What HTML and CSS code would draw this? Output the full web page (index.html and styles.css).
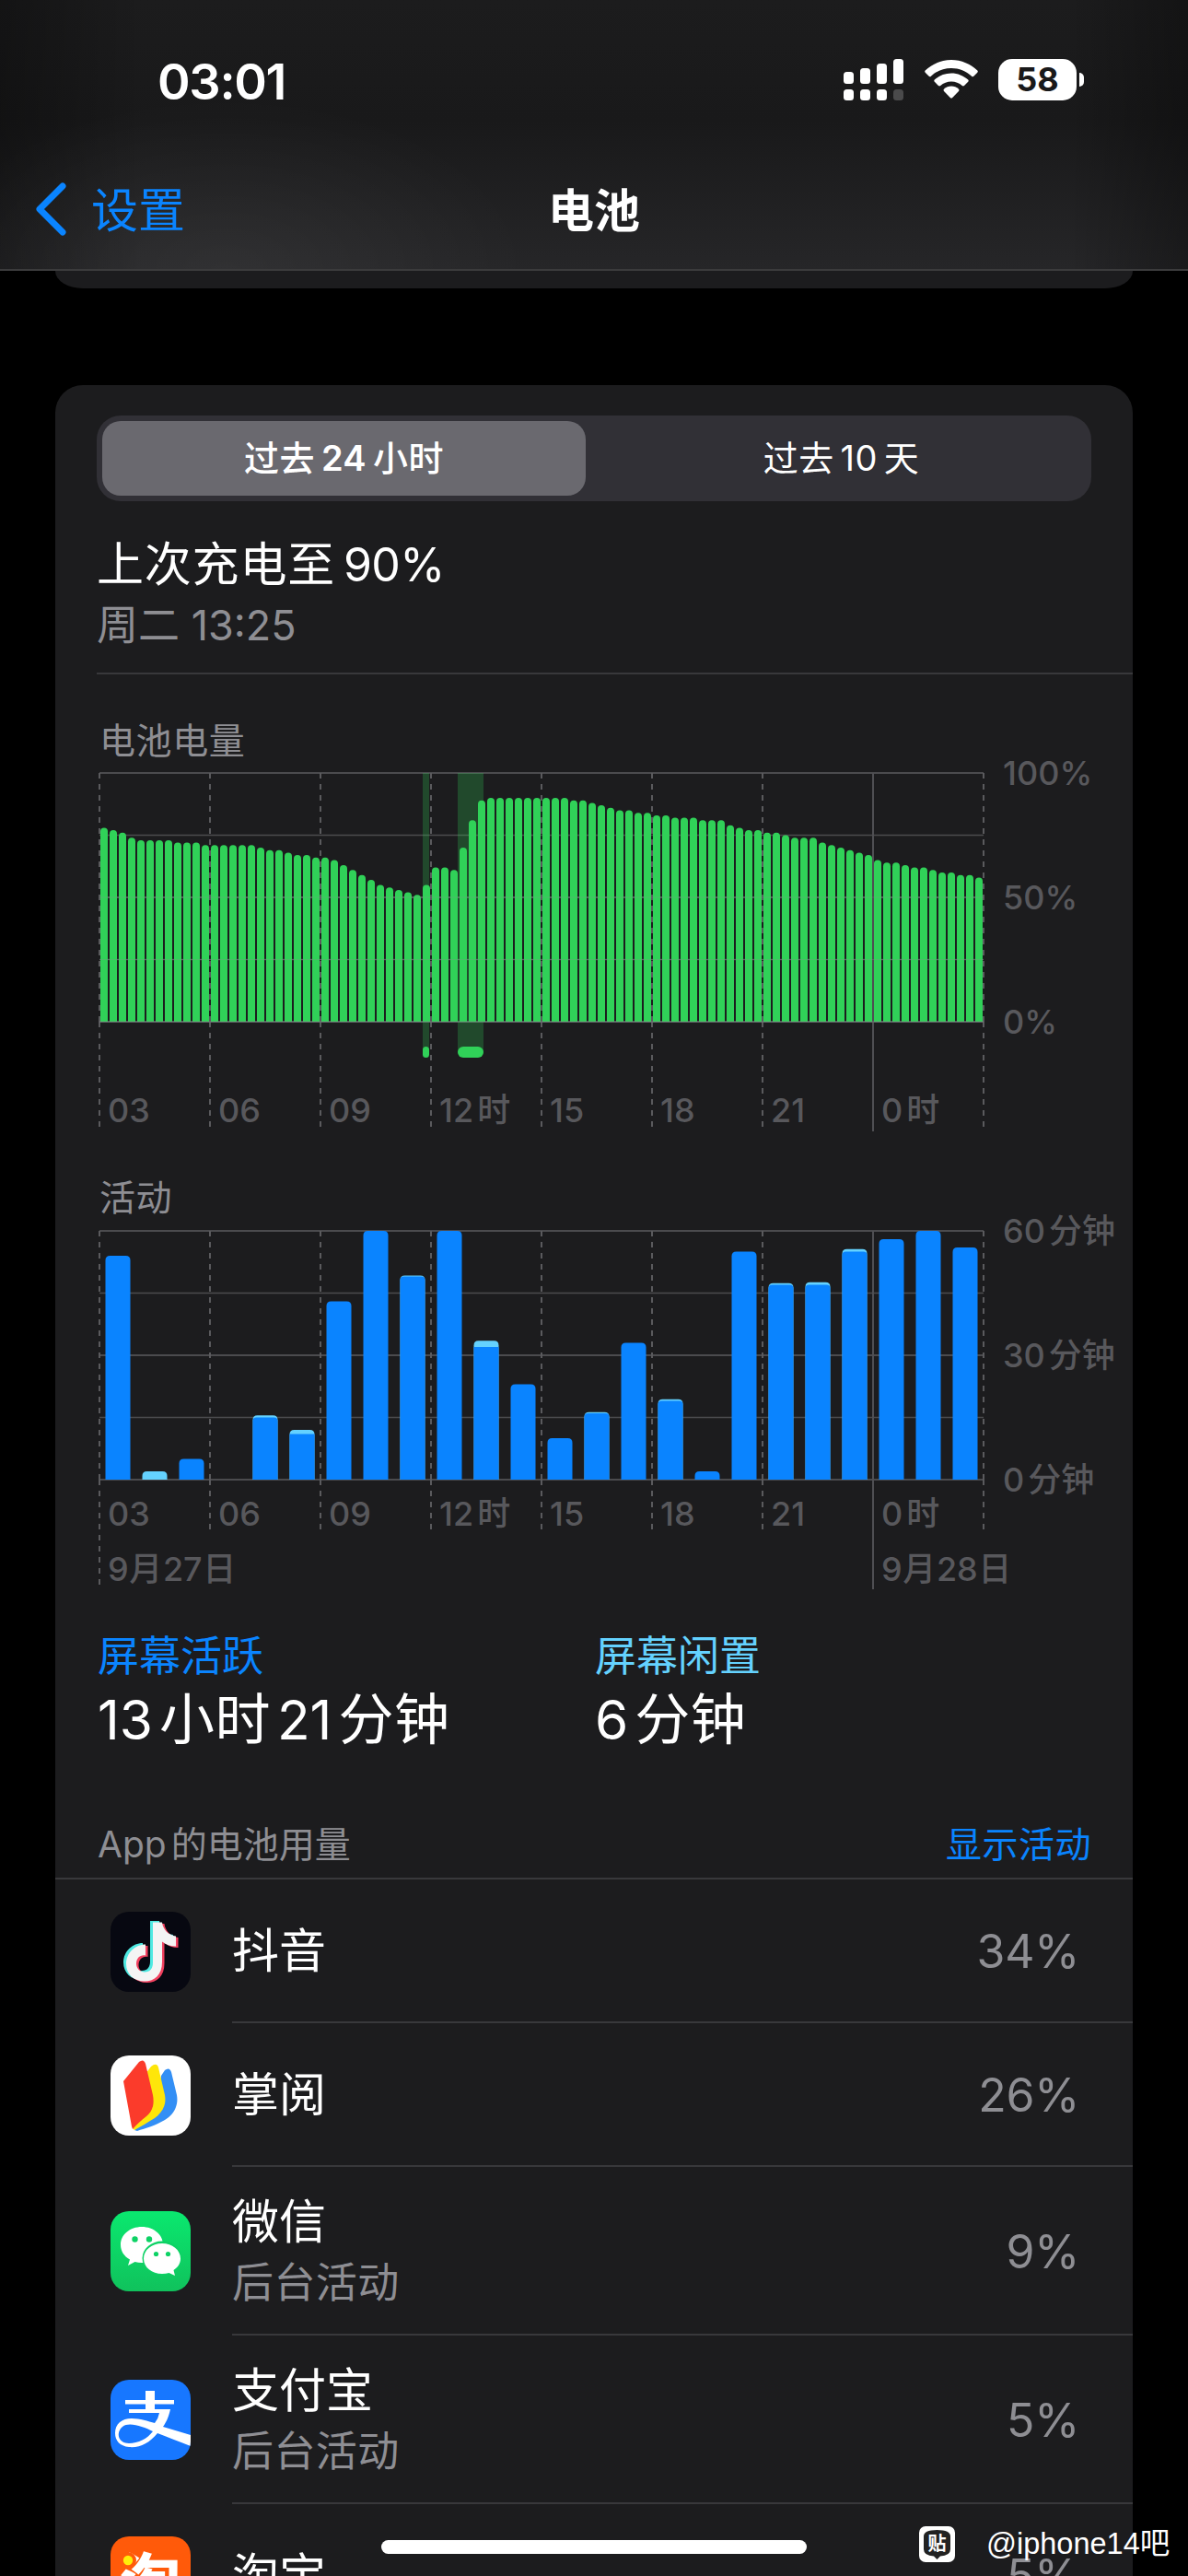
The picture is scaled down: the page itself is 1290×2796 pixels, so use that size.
FILE: index.html
```html
<!DOCTYPE html>
<html lang="zh-CN">
  <head>
    <meta charset="utf-8">
    <title>电池</title>
    <link rel="stylesheet" href="styles.css">
  </head>
  <body>
    <div id="screen">
      <header class="topbar">
        <div class="status">
          <div class="clock">03:01</div>
          <div class="status-icons">
            <svg class="signal" width="66" height="46" viewBox="0 0 66 46" fill="#fff">
              <rect x="0" y="14" width="11" height="13" rx="3.500"/>
              <rect x="18" y="10" width="11" height="17" rx="3.500"/>
              <rect x="36" y="5" width="11" height="22" rx="3.500"/>
              <rect x="54" y="0" width="11" height="27" rx="3.500"/>
              <rect x="0" y="33" width="11" height="12" rx="3.500"/>
              <rect x="18" y="33" width="11" height="12" rx="3.500"/>
              <rect x="36" y="33" width="11" height="12" rx="3.500"/>
              <rect x="54" y="33" width="11" height="12" rx="3.500" fill="#4a4a4b"/>
            </svg>
            <svg class="wifi" width="58" height="43" viewBox="0 0 58 43" fill="#fff">
              <path d="M29 0C40 0 50 4.500 57.300 11.500Q58.300 12.600 57.300 13.700L53.300 17.800Q52.200 18.700 51.100 17.700C45 12 37.500 9 29 9S13 12 6.900 17.700Q5.800 18.700 4.700 17.800L.7 13.700Q-.3 12.600 .7 11.500C8 4.500 18 0 29 0Z"/>
              <path d="M29 14.500C36 14.500 42.300 17.200 47.200 21.600Q48.200 22.700 47.200 23.800L43 28Q41.900 28.900 40.800 28C37.500 25 33.500 23.500 29 23.500S20.500 25 17.200 28Q16.100 28.900 15 28L10.800 23.800Q9.800 22.700 10.800 21.600C15.700 17.200 22 14.500 29 14.500Z"/>
              <path d="M29 28.500C32 28.500 34.800 29.700 37 31.700Q38.100 32.800 37 34L30.200 41Q29 42.200 27.800 41L21 34Q19.900 32.800 21 31.700C23.200 29.700 26 28.500 29 28.500Z"/>
            </svg>
            <div class="battery"><span>58</span></div>
          </div>
        </div>
        <nav class="navbar">
          <a class="back">
            <svg width="36" height="58" viewBox="0 0 36 58" fill="none" stroke="#0a84ff" stroke-width="7" stroke-linecap="round" stroke-linejoin="round"><path d="M30 4 5 29 30 54"/></svg>
            <span>设置</span>
          </a>
          <h1>电池</h1>
        </nav>
      </header>
      <div class="card-tail"></div>

      <main class="card">
        <div class="segment">
          <div class="seg on">过去<b>24</b>小时</div>
          <div class="seg">过去<b>10</b>天</div>
        </div>
        <div class="last-charge">
          <div class="title">上次充电至<b>90%</b></div>
          <div class="sub">周二 13:25</div>
        </div>

        <section class="charts">
          <h2>电池电量</h2>
          <svg id="level" width="1125" height="400" viewBox="105 835 1125 400"></svg>
          <h2 class="second">活动</h2>
          <svg id="activity" width="1125" height="400" viewBox="105 1332 1125 400"></svg>
        </section>

        <div class="totals">
          <div>
            <div class="label active">屏幕活跃</div>
            <div class="value">13<i>小时</i>21<i>分钟</i></div>
          </div>
          <div>
            <div class="label idle">屏幕闲置</div>
            <div class="value">6<i>分钟</i></div>
          </div>
        </div>

        <div class="list-head"><span>App<i>的电池用量</i></span><a>显示活动</a></div>
        <ul class="apps">
          <li>
            <svg class="icon" viewBox="0 0 87 87">
              <rect width="87" height="87" rx="20" fill="#070811"/>
              <defs><path id="note" d="M44 10H54C55 18 61 24 69 25V36C63 36 58 34 54 31V53C54 67 46 74 35 74C23 74 15 66 15 55C15 43 25 34 36 34V46C30 45 26 49 26 55C26 60 30 64 35 64C41 64 44 60 44 54Z"/></defs>
              <use href="#note" x="-1" fill="#4fe9e2"/>
              <use href="#note" x="4.500" y="3" fill="#f1405f"/>
              <use href="#note" x="2" y="1.500" fill="#f4f4f4"/>
            </svg>
            <div class="row"><div class="name">抖音</div><div class="pct">34%</div></div>
          </li>
          <li>
            <svg class="icon" viewBox="0 0 87 87">
              <rect width="87" height="87" rx="20" fill="#fff"/>
              <path d="M55 22 59 16Q64 12 66 18L72 43C74 54 69 64 59 70C49 76 38 79 29 82L26 81 50 60Z" fill="#338ff5"/>
              <path d="M38 20 44 12Q50 7 52 13L59 43C61 54 56 62 48 68C40 73 33 77 26 81L24 79Z" fill="#fee60a"/>
              <path d="M14 28 31 7Q36 3 38 9L46 43C48 54 45 61 39 66C33 71 28 75 24 80L23 77Z" fill="#fb3b2b"/>
            </svg>
            <div class="row"><div class="name">掌阅</div><div class="pct">26%</div></div>
          </li>
          <li class="tall">
            <svg class="icon" viewBox="0 0 87 87">
              <defs><linearGradient id="wx" x1="0" y1="0" x2="0" y2="1"><stop offset="0" stop-color="#0ae86f"/><stop offset="1" stop-color="#10c25c"/></linearGradient></defs>
              <rect width="87" height="87" rx="20" fill="url(#wx)"/>
              <path d="M34 17C47 17 57 25.500 57 36.500S47 56 34 56Q30 56 26.500 55L19 59 21 52.500C14.500 49 11 43 11 36.500C11 25.500 21 17 34 17Z" fill="#fff"/>
              <ellipse cx="56" cy="51" rx="21.500" ry="18.500" fill="#0dd265"/>
              <path d="M56 35C67 35 76 42 76 51.500C76 57 73 61 68.500 64L70 70 63.500 67Q60 68 56 68C45 68 36 61 36 51.500S45 35 56 35Z" fill="#fff"/>
              <g fill="#0dd265"><circle cx="26.500" cy="30.500" r="3.200"/><circle cx="42" cy="30.500" r="3.200"/><circle cx="49.500" cy="46.500" r="2.600"/><circle cx="62.500" cy="46.500" r="2.600"/></g>
            </svg>
            <div class="row"><div class="name">微信<small>后台活动</small></div><div class="pct">9%</div></div>
          </li>
          <li class="tall">
            <svg class="icon" viewBox="0 0 87 87">
              <defs><clipPath id="tile"><rect width="87" height="87" rx="20"/></clipPath></defs>
              <g clip-path="url(#tile)">
                <rect width="87" height="87" fill="#1777ff"/>
                <rect x="38" y="12" width="10" height="22" fill="#fff"/>
                <rect x="16" y="22" width="53" height="4.500" fill="#fff"/>
                <path d="M20 32H65C63 41 60 47 57 51L87 60V72C74 67 62 62 51 58C42 69 32 74 20 73C10 72 5 66 5 58C5 48 12 42 23 42C32 42 41 45 48 47Q52 42 53 36H20ZM46 56C36 51 20 45 13 51C5 58 9 69 20 69C30 69 40 64 46 56Z" fill="#fff" fill-rule="evenodd"/>
              </g>
            </svg>
            <div class="row"><div class="name">支付宝<small>后台活动</small></div><div class="pct">5%</div></div>
          </li>
          <li>
            <svg class="icon" viewBox="0 0 87 87">
              <rect width="87" height="87" rx="20" fill="#ff5a0a"/>
              <text x="10" y="73" class="tao">淘</text>
              <circle cx="19" cy="26" r="6.500" fill="#ff5a0a" stroke="#ff5a0a" stroke-width="5"/>
              <circle cx="19" cy="26" r="5.200" fill="#ffee0a"/>
            </svg>
            <div class="row"><div class="name">淘宝</div><div class="pct">5%</div></div>
          </li>
        </ul>
      </main>

      <div class="home-indicator"></div>
      <div class="watermark">
        <svg width="39" height="39" viewBox="0 0 39 39">
          <rect width="39" height="39" rx="7" fill="#fff"/>
          <path d="M19.500 4Q34 4 34 11V25Q34 32 23 32.500L19.500 36 16 32.500Q5 32 5 25V11Q5 4 19.500 4Z" fill="#222"/>
          <text x="9.500" y="25.500" class="tie">贴</text>
        </svg>
        <span>@iphone14吧</span>
      </div>
    </div>
    <script src="charts.js"></script>
  </body>
</html>
```
FILE: styles.css
```css
* {
  box-sizing: border-box;
}
body {
  margin: 0;
  background: #000;
  color: #fff;
  font-family: Inter, "Noto Sans CJK SC", sans-serif;
}
b, i, h1, h2 {
  font-weight: inherit;
  font-style: normal;
}
#screen {
  position: relative;
  width: 1290px;
  height: 2796px;
  overflow: hidden;
}

/* status + navigation bar */
.topbar {
  height: 294px;
  border-bottom: 2px solid #3b3b3c;
  background:
    radial-gradient(ellipse 330px 190px at 245px 294px, rgba(255,255,255,.05), transparent),
    linear-gradient(90deg, rgba(0,0,0,.3), transparent 12%, transparent 90%, rgba(0,0,0,.3)),
    linear-gradient(#1c1c1d 0, #19191a 45%, #262628 100%);
}
.status {
  height: 174px;
  display: flex;
  justify-content: space-between;
  padding: 0 121px 0 171px;
}
.clock {
  margin-top: 60px;
  font-size: 54px;
  line-height: 58px;
  font-weight: 600;
  letter-spacing: -1.3px;
}
.status-icons {
  display: flex;
  padding-top: 64px;
  align-items: flex-start;
}
.wifi {
  margin: 1px 0 0 22px;
}
.battery {
  position: relative;
  margin-left: 22px;
  width: 85px;
  height: 45px;
  border-radius: 15px;
  background: #fff;
  color: #19191a;
  font-size: 36px;
  font-weight: 700;
  line-height: 45px;
  text-align: center;
}
.battery:after {
  content: "";
  position: absolute;
  left: 88px;
  top: 15px;
  width: 5px;
  height: 15px;
  border-radius: 0 5px 5px 0;
  background: #fff;
}
.navbar {
  display: grid;
  grid-template-columns: 1fr auto 1fr;
  align-items: center;
  height: 106px;
  padding: 0 38px;
  font-size: 51px;
}
.back {
  display: flex;
  align-items: center;
  gap: 25px;
  color: #0a84ff;
}
.back span, h1 {
  padding-bottom: 5px;
}
h1 {
  margin: 0;
  font-size: 50px;
  font-weight: 700;
}

.card-tail {
  height: 19px;
  margin: 0 60px 105px;
  border-radius: 0 0 30px 30px / 0 0 19px 19px;
  background: #1c1c1e;
}
.card {
  width: 1170px;
  height: 2450px;
  margin: 0 60px;
  padding-top: 33px;
  border-radius: 30px 30px 0 0;
  background: #1c1c1e;
}
.segment {
  display: flex;
  width: 1080px;
  height: 93px;
  margin-left: 45px;
  padding: 6px;
  border-radius: 26px;
  background: #313036;
}
.seg {
  flex: 1;
  padding-left: 12px;
  border-radius: 20px;
  text-align: center;
  font-size: 38px;
  line-height: 80px;
  letter-spacing: .4px;
}
.seg b {
  margin: 0 7px;
}
.seg.on {
  flex: 0 0 525px;
  padding: 0;
  background: #6a696f;
  font-weight: 500;
}
.seg.on b {
  font-weight: 600;
}

.last-charge {
  height: 188px;
  margin-left: 45px;
  padding-top: 35px;
  border-bottom: 2px solid #38383b;
}
.title {
  font-size: 51px;
  line-height: 68px;
  letter-spacing: .8px;
}
.title b {
  margin-left: 9px;
  font-size: 50px;
  letter-spacing: -.7px;
}
.sub {
  font-size: 45px;
  line-height: 64px;
  color: #8e8e93;
}

/* charts */
.charts {
  padding-left: 45px;
}
h2 {
  height: 103px;
  margin: 0;
  padding: 44px 0 0 3px;
  font-size: 39px;
  line-height: 56px;
  letter-spacing: .6px;
  color: #8e8e93;
}
.charts svg {
  display: block;
  overflow: visible;
}
h2.second {
  height: 97px;
  padding-top: 37px;
}
.grid {
  stroke: #4b4b4e;
}
.over {
  stroke: #8e8e93;
  opacity: .3;
}
.dash {
  stroke: #5a5a5d;
  stroke-width: 2;
  stroke-dasharray: 6 6;
}
.midnight {
  stroke: #4f4f53;
  stroke-width: 2;
}
.axis {
  font-size: 36px;
  font-weight: 500;
  fill: #58585c;
}
.green {
  fill: #30d158;
}
.charging {
  fill: #30d158;
  opacity: .25;
}
.blue {
  fill: #0a84ff;
}
.cyan {
  fill: #64d2ff;
}

.totals {
  display: grid;
  grid-template-columns: 540px 1fr;
  height: 190px;
  padding: 37px 0 0 46px;
}
.label {
  font-size: 45px;
  line-height: 58px;
}
.label.active {
  color: #0a84ff;
}
.label.idle {
  color: #64d2ff;
}
.value {
  font-size: 58.500px;
  line-height: 78px;
}
.value i {
  margin: 0 7px;
  font-size: 60px;
  letter-spacing: .5px;
}

.list-head {
  display: flex;
  justify-content: space-between;
  height: 118px;
  padding: 52px 45px 0 46px;
  border-bottom: 2px solid #38383b;
  font-size: 39px;
  line-height: 56px;
  color: #8e8e93;
}
.list-head i {
  margin-left: 5px;
}
.list-head a {
  letter-spacing: .5px;
  color: #0a84ff;
}
.apps {
  margin: 0;
  padding: 0;
  list-style: none;
}
.apps li {
  display: flex;
  align-items: center;
  height: 156px;
  padding-left: 60px;
}
.apps li.tall {
  height: 183px;
}
.icon {
  flex: none;
  width: 87px;
  height: 87px;
  margin-right: 45px;
}
.row {
  flex: 1;
  display: flex;
  align-items: center;
  justify-content: space-between;
  height: 100%;
  padding: 2px 58px 0 0;
  border-bottom: 2px solid #38383b;
}
.name {
  font-size: 51px;
  line-height: 68px;
}
.name small {
  display: block;
  font-size: 45px;
  line-height: 64px;
  letter-spacing: .4px;
  color: #8e8e93;
}
.pct {
  font-size: 50px;
  letter-spacing: -.3px;
  color: #8e8e93;
}
.tao {
  font: 900 66px "Noto Sans CJK SC", sans-serif;
  fill: #fff;
}
.tie {
  font: 700 20px "Noto Sans CJK SC", sans-serif;
  fill: #fff;
}

.home-indicator {
  position: absolute;
  left: 414px;
  top: 2757px;
  width: 462px;
  height: 15px;
  border-radius: 8px;
  background: #fff;
}
.watermark {
  position: absolute;
  left: 998px;
  top: 2742px;
  display: flex;
  gap: 34px;
  font: 32.500px/38px "Liberation Sans", "Noto Sans CJK SC", sans-serif;
  white-space: nowrap;
}
```
FILE: charts.js
```js
// battery level, one value per 15 minutes
var level = [
  78,77,76,74,73,73,73,73,72,72,72,71,71,71,71,71,71,70,69,69,68,67,67,66,
  66,65,63,61,59,57,55,54,53,52,51,55,62,62,61,70,81,89,90,90,90,90,90,90,
  90,90,90,89,89,88,87,86,85,85,84,84,83,83,82,82,82,81,81,81,79,78,77,77,
  76,76,75,74,74,74,72,71,70,69,68,67,65,64,64,63,62,62,61,60,60,59,59,58
];
// minutes per hour: [screen on, total]
var activity = [
  [54,54],[0,2],[5,5],[0,0],[15,15.5],[11,12],[43,43],[60,60],
  [49,49.2],[60,60],[32,33.5],[23,23],[10,10],[16,16.3],[33,33],[19,19.4],
  [2,2],[55,55],[47,47.4],[47,47.6],[55,55.6],[58,58],[60,60],[56,56]
];
var hours = ['03', '06', '09', '12时', '15', '18', '21', '0时'];

function line(cls, x1, y1, x2, y2, w) {
  return '<line class="' + cls + '" x1="' + x1 + '" y1="' + y1 + '" x2="' + x2 + '" y2="' + y2 + '" stroke-width="' + (w || 2) + '"/>';
}
// a gap is added where digits meet a Chinese character
function label(x, y, text, gap) {
  var parts = text.match(/\d+%?|[^\d%]+/g);
  return '<text class="axis" x="' + x + '" y="' + y + '">' + parts.map(function(p, i) {
    return '<tspan' + (i ? ' dx="' + (gap || 4) + '"' : '') + '>' + p + '</tspan>';
  }).join('') + '</text>';
}
function hgrid(cls, top) {
  var s = '';
  for (var i = 0; i < 5; i++) {
    var y = top + i * 67.5;
    s += line(cls, 108, y, 1068, y, i % 2 ? 1.3 : 2);
  }
  return s;
}
// the dashes start again below the base line
function vgrid(top, bottom, firstBottom, midBottom) {
  var s = '', base = top + 270;
  for (var i = 0; i < 9; i++) {
    var x = 108 + i * 120;
    if (i == 7) s += line('midnight', x, top, x, midBottom);
    else s += line('dash', x, top, x, base) + line('dash', x, base, x, i ? bottom : firstBottom);
  }
  return s;
}
function topRound(cls, x, y, w, base, r) {
  r = Math.min(r, base - y);
  return '<path class="' + cls + '" d="M' + x + ' ' + base + 'V' + (y + r) + 'q0 ' + -r + ' ' + r + ' ' + -r +
    'h' + (w - 2 * r) + 'q' + r + ' 0 ' + r + ' ' + r + 'V' + base + 'z"/>';
}

var s = hgrid('grid', 839) + vgrid(839, 1223, 1223, 1228);
[[459, 7], [497, 28]].forEach(function(c) {
  s += '<rect class="charging" x="' + c[0] + '" y="839" width="' + c[1] + '" height="303"/>';
  s += '<rect class="green" x="' + c[0] + '" y="1136" width="' + c[1] + '" height="12" rx="' + Math.min(6, c[1] / 2) + '"/>';
});
level.forEach(function(v, i) {
  s += topRound('green', 109 + i * 10, 1109 - v * 2.7, 8, 1109, 4);
});
s += '<g class="over">' + line('', 108, 974, 1068, 974, 1) + line('', 108, 1041.5, 1068, 1041.5, 1) + line('', 108, 1109, 1068, 1109, 2) + '</g>';
hours.forEach(function(h, i) { s += label(117 + i * 120, 1218, h); });
s += label(1089, 852, '100%') + label(1089, 987, '50%') + label(1089, 1122, '0%');
document.getElementById('level').innerHTML = s;

s = hgrid('grid', 1336) + vgrid(1336, 1660, 1720, 1725);
activity.forEach(function(a, i) {
  if (!a[1]) return;
  var x = 114.5 + i * 40, top = 1606 - a[1] * 4.5, on = 1606 - a[0] * 4.5;
  if (a[0] == a[1]) {
    s += topRound('blue', x, top, 27, 1606, 5);
  } else {
    s += topRound('cyan', x, top, 27, 1606, 5);
    if (a[0]) s += topRound('blue', x, on, 27, 1606, a[1] - a[0] < 1 ? 4 : 0);
  }
});
hours.forEach(function(h, i) { s += label(117 + i * 120, 1656, h); });
s += label(117, 1716, '9月27日', .6) + label(957, 1716, '9月28日', .6);
s += label(1089, 1349, '60分钟') + label(1089, 1484, '30分钟') + label(1089, 1619, '0分钟');
document.getElementById('activity').innerHTML = s;
```
